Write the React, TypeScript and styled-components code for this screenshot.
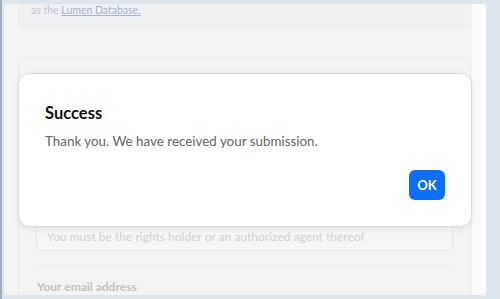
import React from "react";
import styled, { createGlobalStyle } from "styled-components";

const Global = createGlobalStyle`
  html, body { margin: 0; padding: 0; }
  body {
    background: #dfe5ec;
    font-family: Lato, "Noto Sans", Arial, sans-serif;
    overflow: hidden;
  }
`;

const Frame = styled.div`
  box-sizing: border-box;
  width: 500px;
  height: 299px;
  padding: 4px 14px 4px 4px;
  box-shadow: inset 2px 0 0 #a3b0bf;
  overflow: hidden;
  position: relative;
`;

const Window = styled.div`
  height: 100%;
  display: flex;
  background: #f4f4f4;
  border-radius: 4px;
  overflow: hidden;
`;

const Main = styled.div`
  flex: 1;
  padding: 0 1px 0 14px;
  overflow: hidden;
`;

const Strip = styled.div`
  width: 14px;
  background: #fbfbfb;
`;

const Scroll = styled.div`
  margin-top: -26px;
  display: flex;
  flex-direction: column;
  gap: 27px;
`;

const InfoCard = styled.div`
  background: #eff0f2;
  border-radius: 6px;
  padding: 24px 13px 12px;
  font-size: 10.5px;
  line-height: 16px;
  color: #c5c8cd;
`;

const Link = styled.a`
  color: #aab3d3;
  text-decoration: underline;
`;

const FormCard = styled.div`
  background: #f3f3f3;
  border: 1px solid #eaeaea;
  border-radius: 8px;
  padding: 15px 17px 0;
`;

const Input = styled.div<{ $h: number }>`
  box-sizing: border-box;
  height: ${(p) => p.$h}px;
  border: 1px solid #e6e6e6;
  border-radius: 6px;
  background: #f5f5f5;
  padding: 0 10px;
  font-size: 12px;
  color: #d2d2d2;
  display: flex;
  align-items: center;
`;

const Gap = styled.div<{ $h: number }>`
  height: ${(p) => p.$h}px;
`;

const Divider = styled.div`
  height: 1px;
  background: #ececec;
  margin: 14px 0 12px;
`;

const Label = styled.div`
  font-size: 12px;
  line-height: 17px;
  font-weight: 700;
  color: #c3c3c3;
  padding-left: 1px;
`;

const Modal = styled.div`
  position: absolute;
  left: 18px;
  top: 73px;
  width: 454px;
  height: 154px;
  box-sizing: border-box;
  background: #fff;
  border: 1px solid #dcdcdc;
  border-radius: 12px;
  box-shadow: 0 2px 6px rgba(0, 0, 0, 0.08);
  padding: 28px 26px 26px 26px;
  display: flex;
  flex-direction: column;
`;

const Title = styled.h2`
  margin: 0;
  font-size: 16.5px;
  font-weight: 700;
  color: #111;
  line-height: 22px;
`;

const Body = styled.p`
  margin: 7px 0 0;
  font-size: 13.4px;
  color: #666;
  line-height: 20px;
`;

const Actions = styled.div`
  margin-top: auto;
  display: flex;
  justify-content: flex-end;
`;

const OkButton = styled.button`
  width: 36px;
  height: 30px;
  border: none;
  border-radius: 6px;
  background: #0b6efd;
  color: #fff;
  font-family: inherit;
  font-weight: 700;
  font-size: 13px;
  padding: 0;
`;

export default function App() {
  return (
    <>
      <Global />
      <Frame>
        <Window>
          <Main>
            <Scroll>
              <InfoCard>
                as the <Link>Lumen Database.</Link>
              </InfoCard>
              <FormCard>
                <Input $h={122} />
                <Gap $h={27} />
                <Input $h={29}>You must be the rights holder or an authorized agent thereof</Input>
                <Divider />
                <Label>Your email address</Label>
                <Gap $h={20} />
              </FormCard>
            </Scroll>
          </Main>
          <Strip />
        </Window>
        <Modal>
          <Title>Success</Title>
          <Body>Thank you. We have received your submission.</Body>
          <Actions>
            <OkButton>OK</OkButton>
          </Actions>
        </Modal>
      </Frame>
    </>
  );
}
